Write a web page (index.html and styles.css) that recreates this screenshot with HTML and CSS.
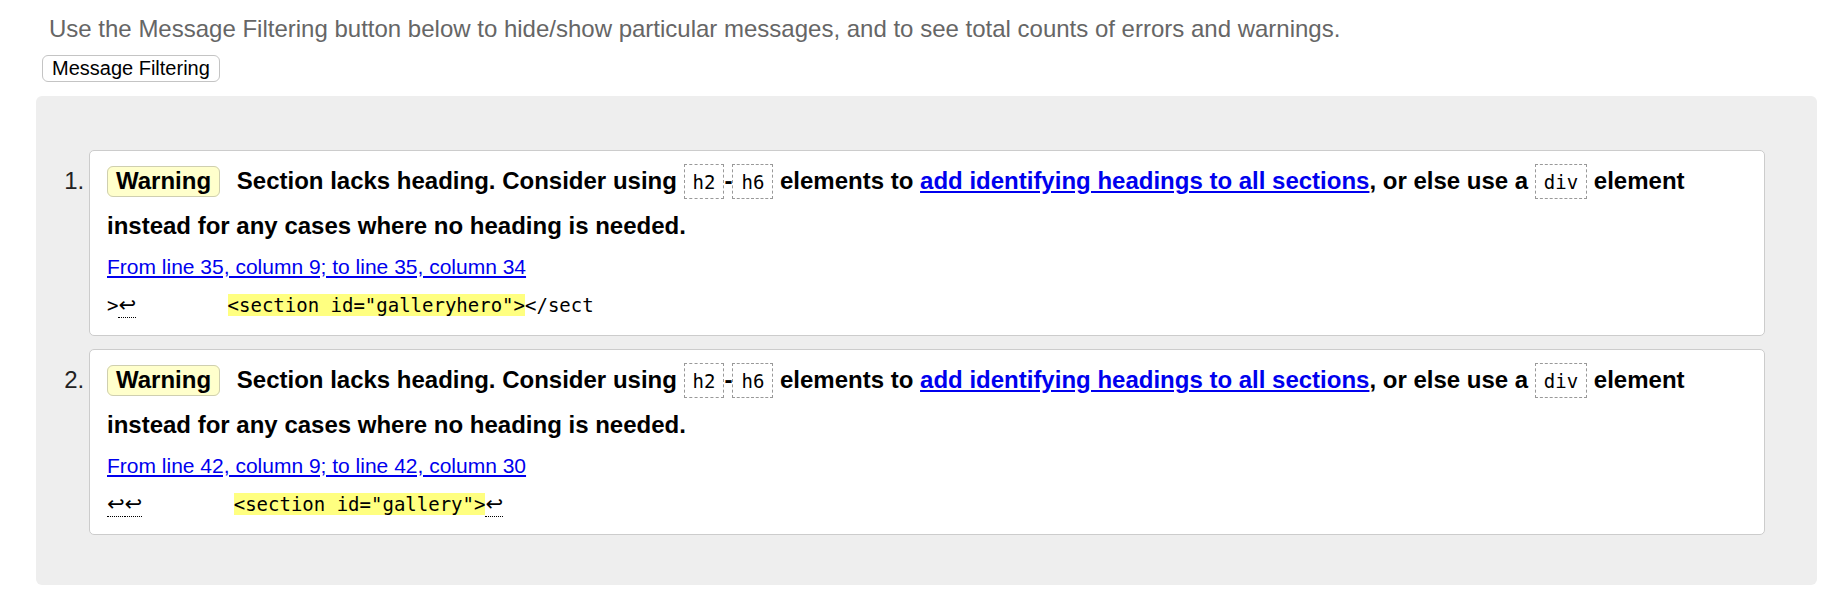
FILE: index.html
```html
<!DOCTYPE html>
<html lang="en">
<head>
<meta charset="utf-8">
<title>Validator results</title>
<link rel="stylesheet" href="styles.css">
</head>
<body>
<div class="page">
  <p class="intro">Use the Message Filtering button below to hide/show particular messages, and to see total counts of errors and warnings.</p>
  <button class="filter-btn" type="button">Message Filtering</button>
  <div class="results">
    <ol class="messages">
      <li class="card">
        <p class="msg"><span class="badge">Warning</span> Section lacks heading. Consider using <code>h2</code>-<code>h6</code> elements to <a href="#">add identifying headings to all sections</a>, or else use a <code>div</code> element instead for any cases where no heading is needed.</p>
        <p class="loc"><a href="#">From line 35, column 9; to line 35, column 34</a></p>
        <p class="extract">&gt;<span class="lf">↩</span>        <b class="hl">&lt;section id="galleryhero"&gt;</b>&lt;/sect</p>
      </li>
      <li class="card">
        <p class="msg"><span class="badge">Warning</span> Section lacks heading. Consider using <code>h2</code>-<code>h6</code> elements to <a href="#">add identifying headings to all sections</a>, or else use a <code>div</code> element instead for any cases where no heading is needed.</p>
        <p class="loc"><a href="#">From line 42, column 9; to line 42, column 30</a></p>
        <p class="extract"><span class="lf">↩</span><span class="lf">↩</span>        <b class="hl">&lt;section id="gallery"&gt;</b><span class="lf">↩</span></p>
      </li>
    </ol>
  </div>
</div>
</body>
</html>
```
FILE: styles.css
```css
html, body {
  margin: 0;
  padding: 0;
  background: #fff;
}

body {
  font-family: "Liberation Sans", Arial, sans-serif;
  color: #000;
}

.page {
  padding: 0 28px 0 36px;
}

.intro {
  margin: 0;
  padding: 15px 0 0 13px;
  font-size: 24px;
  line-height: 28px;
  color: #666;
}

.filter-btn {
  display: block;
  margin: 12px 0 0 6px;
  padding: 1px 9px;
  font-family: "Liberation Sans", Arial, sans-serif;
  font-size: 20px;
  line-height: 23px;
  color: #000;
  background: #fff;
  border: 1px solid #c4c4c4;
  border-radius: 6px;
}

.results {
  margin-top: 14px;
  background: #eeeeee;
  border-radius: 6px;
  padding: 54px 52px 50px 53px;
}

.messages {
  margin: 0;
  padding: 0;
  list-style: decimal outside;
}

.card {
  background: #fff;
  border: 1px solid #cccccc;
  border-radius: 5px;
  padding: 8px 17px 18px;
  margin-bottom: 13px;
  font-size: 24px;
}

.card:last-child {
  margin-bottom: 0;
}

.card::marker {
  content: counter(list-item) ".\2009";
  font-weight: normal;
  color: #222;
}

.msg {
  margin: 0;
  font-weight: bold;
  line-height: 44px;
}

.badge {
  background: #ffffcc;
  border: 1px solid #cfcfb0;
  border-radius: 6px;
  padding: 0 8px 2px;
  margin-right: 10px;
}

.msg code {
  font-family: "DejaVu Sans Mono", monospace;
  font-size: 19px;
  font-weight: normal;
  border: 1px dashed #999;
  padding: 6px 8px 5px;
}

.msg a,
.loc a {
  color: #0000ee;
  text-decoration: underline;
}

.loc {
  margin: 6.5px 0 0;
  font-size: 21px;
  line-height: 24px;
}

.extract {
  margin: 14.5px 0 0;
  font-family: "DejaVu Sans Mono", monospace;
  font-size: 19px;
  line-height: 24px;
  white-space: pre;
}

.hl {
  font-weight: normal;
  background: #ffff80;
}

.lf {
  font-family: "DejaVu Sans", sans-serif;
  font-size: 21px;
  line-height: 1;
  border-bottom: 1px dotted #000;
}
```
